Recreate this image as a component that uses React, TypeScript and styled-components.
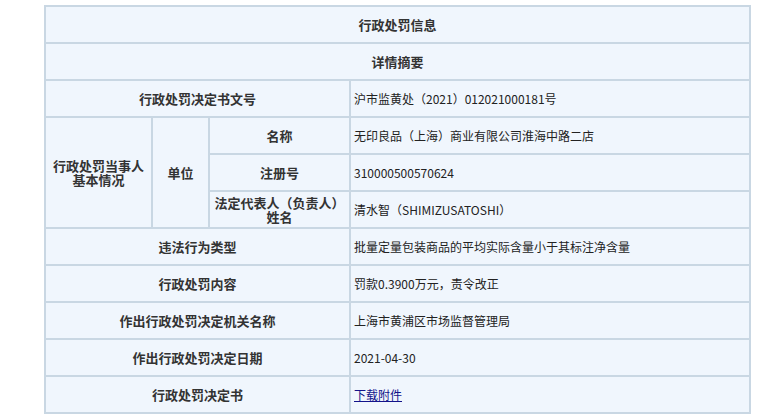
import React from "react";
import styled, { createGlobalStyle } from "styled-components";

const GlobalStyle = createGlobalStyle`
  html, body {
    margin: 0;
    padding: 0;
    background: #ffffff;
  }
  body {
    font-family: "Noto Sans CJK SC", "Noto Sans", sans-serif;
  }
`;

const Page = styled.div`
  padding: 5px 0 0 44px;
`;

const Grid = styled.div`
  display: grid;
  grid-template-columns: 105px 55px 139px 398px;
  grid-auto-rows: 35px;
  gap: 2px;
  padding: 2px;
  width: max-content;
  background: #c9d7e3;
`;

const Cell = styled.div<{ $col?: string; $row?: string }>`
  background: #f0f6fd;
  display: flex;
  align-items: center;
  grid-column: ${(p) => p.$col || "auto"};
  grid-row: ${(p) => p.$row || "auto"};
`;

const HeadCell = styled(Cell)`
  justify-content: center;
  text-align: center;
  font-size: 13px;
  line-height: 14px;
  font-weight: bold;
  color: #333333;
`;

const ValueCell = styled(Cell)`
  padding-left: 3px;
  font-size: 12px;
  color: #222222;
  white-space: nowrap;
`;

const Link = styled.a`
  color: #13138a;
  text-decoration: underline;
  cursor: pointer;
`;

const rows: [string, React.ReactNode][] = [
  ["违法行为类型", "批量定量包装商品的平均实际含量小于其标注净含量"],
  ["行政处罚内容", "罚款0.3900万元，责令改正"],
  ["作出行政处罚决定机关名称", "上海市黄浦区市场监督管理局"],
  ["作出行政处罚决定日期", "2021-04-30"],
  ["行政处罚决定书", <Link key="l">下载附件</Link>],
];

export default function App() {
  return (
    <>
      <GlobalStyle />
      <Page>
        <Grid>
          <HeadCell $col="1 / 5">行政处罚信息</HeadCell>
          <HeadCell $col="1 / 5">详情摘要</HeadCell>

          <HeadCell $col="1 / 4">行政处罚决定书文号</HeadCell>
          <ValueCell>沪市监黄处（2021）012021000181号</ValueCell>

          <HeadCell $col="1" $row="4 / 7">
            行政处罚当事人
            <br />
            基本情况
          </HeadCell>
          <HeadCell $col="2" $row="4 / 7">单位</HeadCell>
          <HeadCell $col="3" $row="4">名称</HeadCell>
          <ValueCell $col="4" $row="4">无印良品（上海）商业有限公司淮海中路二店</ValueCell>
          <HeadCell $col="3" $row="5">注册号</HeadCell>
          <ValueCell $col="4" $row="5">310000500570624</ValueCell>
          <HeadCell $col="3" $row="6">
            法定代表人（负责人）
            <br />
            姓名
          </HeadCell>
          <ValueCell $col="4" $row="6">清水智（SHIMIZUSATOSHI）</ValueCell>

          {rows.map(([label, value]) => (
            <React.Fragment key={label}>
              <HeadCell $col="1 / 4">{label}</HeadCell>
              <ValueCell $col="4">{value}</ValueCell>
            </React.Fragment>
          ))}
        </Grid>
      </Page>
    </>
  );
}
